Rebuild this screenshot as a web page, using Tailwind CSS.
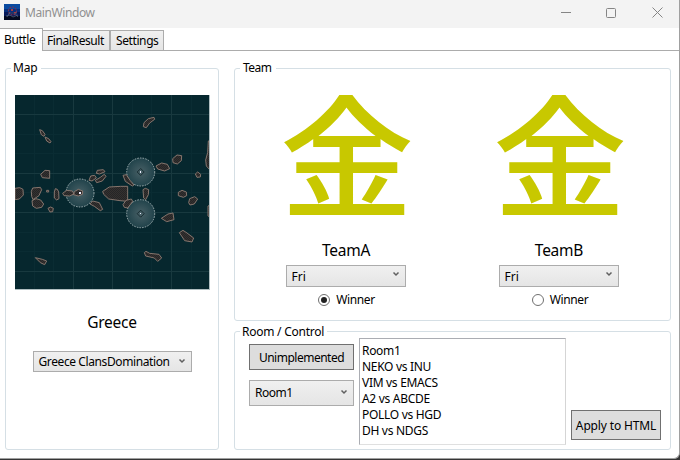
<!DOCTYPE html>
<html lang="en">
<head>
<meta charset="utf-8">
<title>MainWindow</title>
<script src="https://cdn.jsdelivr.net/npm/@tailwindcss/browser@4"></script>
</head>
<body class="bg-[#353535] w-[680px] h-[460px] overflow-hidden font-['Noto_Sans','Open_Sans',sans-serif] text-[12px] leading-4 text-black">
<div class="w-[680px] h-[459px] bg-white border-r border-b border-[#a0a0a0] rounded-br-[6px] flex flex-col overflow-hidden">
  <header class="h-[28px] shrink-0 bg-[#f3f3f3] flex items-center">
    <svg class="ml-1 mt-[-4px] w-4 h-4" viewBox="0 0 16 16">
      <rect width="16" height="16" fill="#06195a"/><path d="M0 0h16v5H0z" fill="#0a4aa0"/><path d="M0 5h16v3H0z" fill="#08307c"/><path d="M0 12h16v4H0z" fill="#040a20"/>
      <circle cx="8.500" cy="7" r="4" fill="none" stroke="#7a3150" stroke-width="1.200" stroke-dasharray="2 1"/>
      <path d="M3 13l3-5M10 8l4 5M5 9h8M2 12l4-1 3 2 5-2" stroke="#596583" fill="none" stroke-width=".7"/><path d="M7 5h2v2H7zM10 8h2v1h-2z" fill="#a43b41"/>
    </svg>
    <span class="ml-[5px] mt-[-3px] text-[#909090] tracking-[-0.5px]"><span class="tracking-[-0.4px]">MainWindow</span></span>
    <svg class="ml-auto mt-[-3px] w-[120px] h-6" viewBox="0 0 120 24" fill="none" stroke="#858585" stroke-width="1">
      <path d="M2 11.500h10M93.500 6.500l10 10M103.500 6.500l-10 10"/><rect x="47.500" y="7.500" width="9" height="9" rx="1"/>
    </svg>
  </header>
  <nav class="h-[23px] shrink-0 flex items-end">
    <div class="w-[43px] h-[23px] border-t border-r border-[#acacac] bg-white pl-1 pt-[3px] whitespace-nowrap tracking-[-0.4px]">Buttle</div>
    <div class="w-[67px] h-[21px] border-t border-r border-b border-[#acacac] bg-linear-to-b from-[#f0f0f0] to-[#e5e5e5] pl-1 pt-[2px] whitespace-nowrap tracking-[-0.4px]">FinalResult</div>
    <div class="w-[54px] h-[21px] border border-[#acacac] bg-linear-to-b from-[#f0f0f0] to-[#e5e5e5] pl-[5px] pt-[2px] whitespace-nowrap tracking-[-0.4px]">Settings</div>
    <div class="grow border-b border-[#acacac]"></div>
  </nav>
  <main class="flex pl-[5px] pt-[9px] gap-[15px]">
    <fieldset class="w-[214px] h-[390px] border border-[#d5dfe5] rounded-[3px] flex flex-col items-center">
      <legend class="ml-[5px] pl-[2px] pr-[4px] h-4 tracking-[-0.2px]">Map</legend>
      <svg class="mt-[19px] w-[195px] h-[195px] shrink-0" viewBox="0 0 195 195">
        <defs><radialGradient id="zone"><stop offset="0" stop-color="#486066"/><stop offset="1" stop-color="#21434b"/></radialGradient>
        <pattern id="rock" width="6" height="6" patternUnits="userSpaceOnUse"><rect width="6" height="6" fill="#35312f"/><path d="M0 0h3v3H0zM3 3h3v3H3z" fill="#242527"/></pattern></defs>
        <rect width="195" height="195" fill="#06272e"/>
        <g fill="none" stroke="#0a2c33"><path d="M19.500 0v195M38.500 0v195M77.500 0v195M117.500 0v195M136.500 0v195M176.500 0v195M0 39.500h195M0 58.500h195M0 97.500h195M0 137.500h195M0 156.500h195"/><path stroke="#18393f" d="M58.500 0v195M97.500 0v195M156.500 0v195M0 19.500h195M0 78.500h195M0 117.500h195M0 176.500h195"/></g>
        <g fill="url(#zone)" stroke="#a3b2b4" stroke-width="1" stroke-dasharray="1.500 1.200"><circle cx="65" cy="98" r="14"/><circle cx="125.700" cy="77" r="14"/><circle cx="125.700" cy="118.700" r="14"/></g>
        <g fill="url(#rock)" stroke="#8d7b72" stroke-width="2.800" stroke-linejoin="round">
          <g transform="translate(-5 -5) scale(.33333)">
            <path d="M89 119l8 3 8 11-3 6-8-5zM105 141l11 5 7 9-3 4-10-6zM92 253l13-12 14 1 0 23-22-2zM262 241l18-2 5 6-16 7-10-2zM256 271l15-9 12-9 5 6-11 14-17 5zM237 271l5-13 12-2 5 8-13 9z"/>
            <path d="M15 295l14-2 10 5 1 17-12 12-13 2zM64 304l4-10 23-2 4 7-8 18-18 12-4-10zM136 296l6 2 4 8 1 20-7 4-7-6 0-18zM110 301h6v5h-6zM158 310l12-9 17 2 5 9-13 6-17-1zM193 305l12-7 13 5-1 10-12 5-14-4zM278 304l20-13 34-2h21v45l-23-2-34-5-15-14z"/>
          </g>
          <g transform="translate(90 -5) scale(.33333)">
            <path d="M115 110l2-12 13-12 17-4 2 6-15 11-10 14zM153 228l17-9 17 4 7 13-15 7-21-6zM203 206l13-11 14 2-1 15-12 10-13-4zM271 252l7-6 9 7-1 8-10 1zM54 256l10-2 11 17 12 14-5 3-21-14zM114 299l7-4 10 4-1 15-8 15-6-5zM220 307l11-6 13 5 1 11-10 5-15-5zM315 151l-5 2-2 35-6 22 2 18 11 12z"/>
          </g>
          <g transform="translate(-5 95) scale(.33333)">
            <path d="M66 32l12-6 14 4 9 12-6 10-16 3-11-7zM114 55l8-4 8 4-2 10-8 1zM76 203l21 5 13 5-6 11-13-6zM240 42l8-9 20 5 10 20-7 4-18-13z"/>
          </g>
          <g transform="translate(90 95) scale(.33333)">
            <path d="M54 44l9-13 16-4 4 7-15 20-10-2zM169 85l20-13 15-3 3 20-22 6zM251 38l3-12 15-6 9 7-10 15-13 3zM223 128l11-7 12 8 20 15-5 12-22-4zM118 188l5-4 11 6 28 3 8 11-12 10-10-10-26-6zM315 45l-6 3v30l6 3z"/>
          </g>
        </g>
        <g fill="none" stroke="#14272d" stroke-width=".9"><path d="M125.700 73.500l3.500 3.500-3.500 3.500-3.500-3.500zM125.700 115.200l3.500 3.500-3.500 3.500-3.500-3.500z"/></g>
        <path d="M64 97h2v2h-2zM125 76h1v2h-1zM125 118h1v1h-1z" fill="#eef"/>
        <path d="M194.500 0v195M0 194.500h195" stroke="#b0bec1" fill="none"/>
      </svg>
      <div class="mt-[22px] h-5 text-[15.5px] leading-5 tracking-[-0.25px]">Greece</div>
      <div class="mt-[19px] w-[159px] h-[21px] border border-[#acacac] bg-linear-to-b from-[#f0f0f0] to-[#e5e5e5] flex items-center pl-[5px] pr-[5px] whitespace-nowrap">
        <span class="tracking-[-0.4px]">Greece ClansDomination</span>
        <svg class="ml-auto mt-[-2px] w-2 h-2 shrink-0" viewBox="0 0 8 8"><path d="M1.500 2.500L4 5l2.500-2.500" stroke="#606060" stroke-width="1.500" fill="none"/></svg>
      </div>
    </fieldset>
    <div class="flex flex-col gap-[2px]">
      <fieldset class="w-[437px] h-[261px] border border-[#d5dfe5] rounded-[3px]">
        <legend class="ml-[5px] pl-[3px] pr-[4px] h-4 tracking-[-0.5px]">Team</legend>
        <div class="flex pl-[4px]">
          <div class="w-[213px] flex flex-col items-center">
            <div class="h-[148px] w-[140px] ml-[3px] mb-4 flex items-center justify-center font-['Noto_Sans_CJK_JP',sans-serif] font-medium text-[134px] leading-[134px] text-[#c8c800]"><span class="block scale-y-98">金</span></div>
            <div class="h-5 text-[15.5px] leading-5 tracking-[-0.25px] mr-[-1px]">TeamA</div>
            <div class="mt-[5px] w-[120px] h-[22px] border border-[#acacac] bg-linear-to-b from-[#f0f0f0] to-[#e5e5e5] flex items-center px-[5px]">
              <span class="mt-px">Fri</span>
              <svg class="ml-auto mt-[-4px] w-2 h-2" viewBox="0 0 8 8"><path d="M1.500 2.500L4 5l2.500-2.500" stroke="#606060" stroke-width="1.500" fill="none"/></svg>
            </div>
            <div class="mt-[5px] ml-[2px] flex items-center gap-[6px]"><svg class="w-3 h-3 mt-[-1px]" viewBox="0 0 12 12"><circle cx="6" cy="6" r="5.500" fill="#fff" stroke="#707070"/><circle cx="6" cy="6" r="3" fill="#212121"/></svg><span class="tracking-[-0.4px]">Winner</span></div>
          </div>
          <div class="w-[213px] flex flex-col items-center">
            <div class="h-[148px] w-[140px] ml-[3px] mb-4 flex items-center justify-center font-['Noto_Sans_CJK_JP',sans-serif] font-medium text-[134px] leading-[134px] text-[#c8c800]"><span class="block scale-y-98">金</span></div>
            <div class="h-5 text-[15.5px] leading-5 tracking-[-0.25px] mr-[-1px]">TeamB</div>
            <div class="mt-[5px] w-[120px] h-[22px] border border-[#acacac] bg-linear-to-b from-[#f0f0f0] to-[#e5e5e5] flex items-center px-[5px]">
              <span class="mt-px">Fri</span>
              <svg class="ml-auto mt-[-4px] w-2 h-2" viewBox="0 0 8 8"><path d="M1.500 2.500L4 5l2.500-2.500" stroke="#606060" stroke-width="1.500" fill="none"/></svg>
            </div>
            <div class="mt-[5px] ml-[3px] flex items-center gap-[6px]"><svg class="w-3 h-3 mt-[-1px]" viewBox="0 0 12 12"><circle cx="6" cy="6" r="5.500" fill="#fff" stroke="#707070"/></svg><span class="tracking-[-0.4px]">Winner</span></div>
          </div>
        </div>
      </fieldset>
      <fieldset class="w-[437px] h-[127px] border border-[#d5dfe5] rounded-[3px]">
        <legend class="ml-[5px] pl-[2px] pr-[3px] h-4 pt-px tracking-[-0.25px]">Room / Control</legend>
        <div class="flex pl-[14px] mt-[-1px] h-[107px]">
          <div class="w-[105px] pt-[6px] flex flex-col gap-[10px]">
            <button class="h-[26px] pt-px border border-[#707070] bg-[#dddddd] whitespace-nowrap tracking-[-0.5px]">Unimplemented</button>
            <div class="h-[26px] border border-[#acacac] bg-linear-to-b from-[#f0f0f0] to-[#e5e5e5] flex items-center px-[5px]">
              <span class="mt-[-1px] tracking-[-0.5px]">Room1</span>
              <svg class="ml-auto mt-[-2px] w-2 h-2" viewBox="0 0 8 8"><path d="M1.500 2.500L4 5l2.500-2.500" stroke="#606060" stroke-width="1.500" fill="none"/></svg>
            </div>
          </div>
          <div class="ml-[5px] w-[207px] h-[107px] border border-t-[#abadb3] border-l-[#abadb3] border-r-[#d5d5d5] border-b-[#e0e0e0] pl-[2px] pt-1 tracking-[-0.3px]">
            <p>Room1</p><p>NEKO vs INU</p><p>VIM vs EMACS</p><p>A2 vs ABCDE</p><p>POLLO vs HGD</p><p>DH vs NDGS</p>
          </div>
          <button class="ml-[5px] mt-[72px] w-[90px] h-[30px] pt-px border border-[#707070] bg-[#dddddd] whitespace-nowrap tracking-[-0.15px]">Apply to HTML</button>
        </div>
      </fieldset>
    </div>
  </main>
</div>
</body>
</html>
